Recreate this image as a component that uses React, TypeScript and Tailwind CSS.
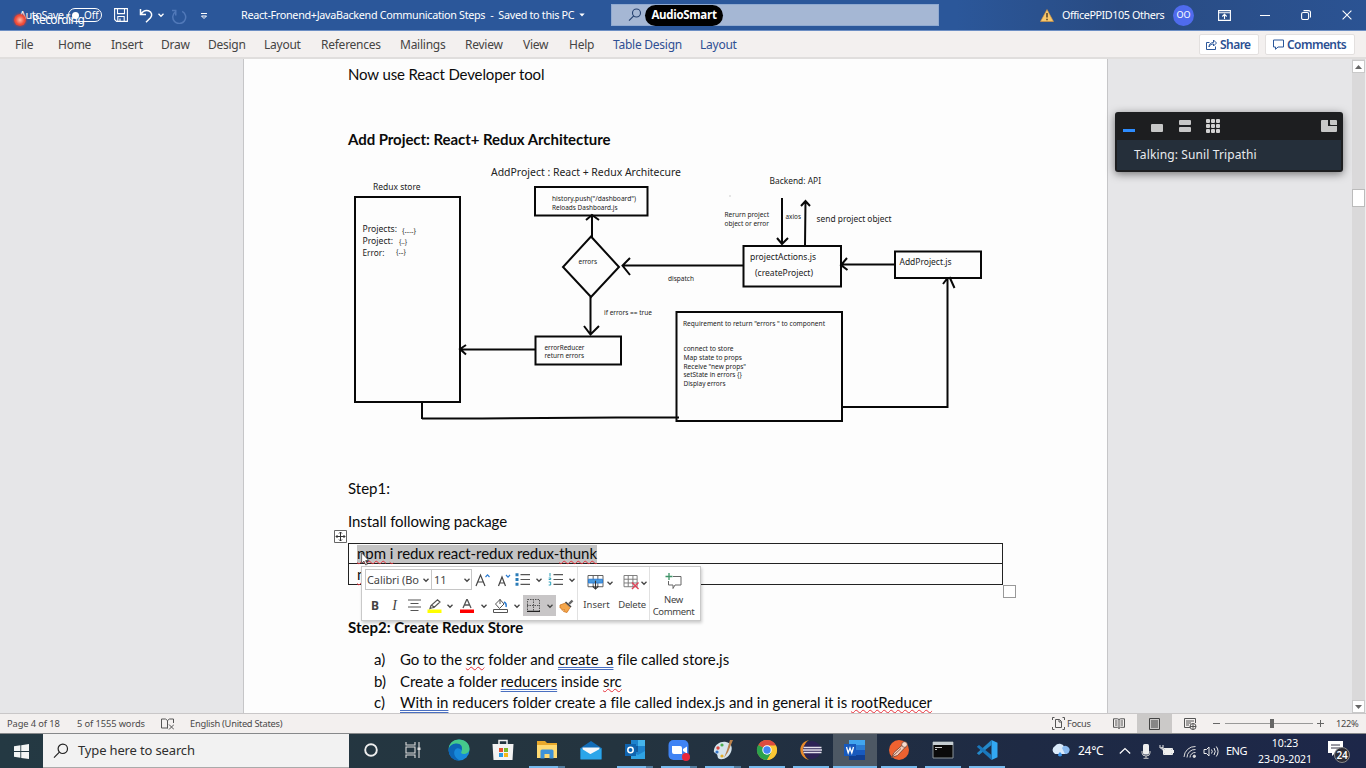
import React from 'react';

type Kids = { children?: React.ReactNode };

function Chevron({ className = '' }: { className?: string }) {
  return (
    <svg viewBox="0 0 8 8" className={`h-[8px] w-[8px] shrink-0 ${className}`} fill="none" stroke="currentColor" strokeWidth="1.3">
      <path d="M1.5 2.8 4 5.3 6.5 2.8" />
    </svg>
  );
}

function TitleBar() {
  return (
    <header className="relative flex h-[31px] shrink-0 items-center border-b border-[#6d8fc4] bg-[linear-gradient(90deg,#2b579a_0%,#2b579a_70%,#294b82_82%,#2b5393_100%)] font-['Noto_Sans',sans-serif] text-[10.8px] text-white">
      <span className="ml-[19px] w-[49px] shrink-0 whitespace-nowrap text-[11px] tracking-[-0.5px]">AutoSave</span>
      <span className="flex h-[14px] w-[34px] shrink-0 items-center rounded-full border border-white pl-[3px] text-[10px]">
        <span className="mr-[5px] h-[7px] w-[7px] rounded-full bg-white" />
        Off
      </span>
      <svg viewBox="0 0 14 14" className="ml-[12px] h-[14px] w-[14px] shrink-0" fill="none" stroke="white" strokeWidth="1.1">
        <path d="M.6.6h12.8v12.8H2.6l-2-2zM3.5.6v5h7v-5M3.8 13.4V8.5h6.4v4.9M6 13v-2.5" />
      </svg>
      <svg viewBox="0 0 14 15" className="ml-[11px] h-[15px] w-[14px] shrink-0" fill="none" stroke="white" strokeWidth="1.5">
        <path d="M1.5 1v5.5H7M1.8 6.3C4 3 7 2 9.5 2.8c3.5 1.2 4 4.500 2 7L7 14.2" />
      </svg>
      <Chevron className="ml-[4px]" />
      <svg viewBox="0 0 14 14" className="ml-[7px] mt-[2px] h-[15px] w-[15px] shrink-0 text-[#5179b9]" fill="none" stroke="currentColor" strokeWidth="1.4">
        <path d="M9.500 2.200A6 6 0 1 1 3.500 2.500M3.500 6V1.500H0" />
      </svg>
      <svg viewBox="0 0 8 8" className="ml-[13px] mt-[2px] h-[8px] w-[8px] shrink-0" fill="none" stroke="white" strokeWidth="1">
        <path d="M1 1.500h6M1.500 4h5L4 6.500z" />
      </svg>
      <span className="ml-[33px] w-[335px] shrink-0 whitespace-pre tracking-[-0.31px]">React-Fronend+JavaBackend Communication Steps  -  Saved to this PC</span>
      <svg viewBox="0 0 8 8" className="ml-[2px] h-[8px] w-[8px] shrink-0" fill="white"><path d="M1.300 2.500h5.400L4 5.500z" /></svg>
      <div className="ml-[25px] flex h-[22px] w-[328px] shrink-0 items-center border border-[#8fa9d0] bg-[#a5b7d4] pl-[16px]">
        <svg viewBox="0 0 14 14" className="h-[14px] w-[14px] shrink-0" fill="none" stroke="#24406f" strokeWidth="1.100">
          <circle cx="8.500" cy="5" r="4" /><path d="M5.700 7.900 1 12.700" />
        </svg>
        <span className="ml-[3px] flex h-[21px] w-[78px] items-center justify-center rounded-full bg-black font-['Open_Sans',sans-serif] text-[11.5px] font-bold tracking-[-0.3px]">AudioSmart</span>
      </div>
      <svg viewBox="0 0 14 13" className="ml-[101px] h-[13px] w-[14px] shrink-0">
        <path d="M7 .5 13.500 12.500H.5z" fill="#f8c86b" stroke="#d9963c" strokeWidth=".6" />
        <path d="M7 4v4.500M7 9.800v1.400" stroke="#3a2b1c" strokeWidth="1.300" />
      </svg>
      <span className="ml-[8px] w-[103px] shrink-0 whitespace-nowrap tracking-[-0.42px]">OfficePPID105 Others</span>
      <span className="ml-[8px] flex h-[21px] w-[21px] shrink-0 items-center justify-center rounded-full bg-[#4f6bed] text-[9px]">OO</span>
      <svg viewBox="0 0 13 11" className="ml-[24px] h-[11px] w-[13px] shrink-0" fill="none" stroke="white" strokeWidth="1.100">
        <path d="M.6.6h11.800v9.800H.6zM.6 2.700h11.800M6.500 9V4.500M4.300 6.500l2.200-2.200 2.200 2.200" />
      </svg>
      <span className="ml-[29px] h-px w-[10px] shrink-0 bg-white" />
      <svg viewBox="0 0 10 10" className="ml-[31px] h-[10px] w-[10px] shrink-0" fill="none" stroke="white" strokeWidth="1.100">
        <rect x=".6" y="2.500" width="7" height="7" rx="1.500" /><path d="M2.500.6H7.500a2 2 0 0 1 2 2V7.500" />
      </svg>
      <svg viewBox="0 0 10 10" className="ml-[31px] h-[10px] w-[10px] shrink-0" fill="none" stroke="white" strokeWidth="1.100"><path d="m.6.6 8.800 8.800M9.400.6.6 9.400" /></svg>
      <div className="absolute left-[14px] top-[12px] flex items-center">
        <span className="h-[12px] w-[12px] rounded-full bg-[radial-gradient(circle,#ffb9a8_0%,#f2513d_50%,#cc2c20_100%)] shadow-[0_0_3px_#e03a2c]" />
        <span className="ml-[6px] text-[12px] leading-[16px] tracking-[-0.55px]">Recording</span>
      </div>
    </header>
  );
}

const tabs: [string, string][] = [
  ['File', 'w-[43px]'], ['Home', 'w-[53px]'], ['Insert', 'w-[50px]'], ['Draw', 'w-[47px]'], ['Design', 'w-[56px]'],
  ['Layout', 'w-[57px]'], ['References', 'w-[79px]'], ['Mailings', 'w-[65px]'], ['Review', 'w-[58px]'], ['View', 'w-[46px]'], ['Help', 'w-[44px]'],
];

function Ribbon() {
  return (
    <nav className="flex h-[28px] shrink-0 items-center border-b-2 border-[#e0dedd] bg-[#f3f0ef] pl-[15px] pt-px font-['Noto_Sans',sans-serif] text-[12px] tracking-[-0.25px] text-[#454443]">
      {tabs.map(([t, w]) => <span key={t} className={`${w} shrink-0 whitespace-nowrap`}>{t}</span>)}
      <span className="w-[87px] shrink-0 text-[#2f4f93]">Table Design</span>
      <span className="w-[499px] shrink-0 text-[#2f4f93]">Layout</span>
      <span className="flex h-[21px] w-[60px] shrink-0 items-center rounded-[2px] border border-[#e3e0df] bg-white pl-[6px] font-semibold tracking-[-0.55px] text-[#2b4f92]">
        <svg viewBox="0 0 11 11" className="mr-[3px] h-[11px] w-[11px] shrink-0" fill="none" stroke="#2b579a" strokeWidth="1"><path d="M3.500 3.500h-3v7h9V7.500M3 8c0-3 2-4.500 4.500-4.500V1l3 3-3 3V5C5.500 5 4 5.500 3 8z" /></svg>
        Share
      </span>
      <span className="ml-[6px] flex h-[21px] w-[90px] shrink-0 items-center rounded-[2px] border border-[#e3e0df] bg-white pl-[7px] font-semibold tracking-[-0.55px] text-[#2b4f92]">
        <svg viewBox="0 0 11 11" className="mr-[3px] h-[11px] w-[11px] shrink-0" fill="none" stroke="#2b579a" strokeWidth="1"><path d="M.5 1h10v7H5L2.500 10.300V8h-2z" /></svg>
        Comments
      </span>
    </nav>
  );
}

function Txt({ x, y, w, s = 7.6, children }: { x: number; y: number; w: number; s?: number } & Kids) {
  return <text x={x} y={y - 0.4} fontSize={s} textLength={w} lengthAdjust="spacingAndGlyphs">{children}</text>;
}

function Diagram() {
  return (
    <svg viewBox="348 160 655 270" className="mt-[10px] h-[270px] w-[655px] shrink-0 font-['Noto_Sans',sans-serif]" fill="#222">
      <g fill="none" stroke="#080808" strokeWidth="2">
        <rect x="355" y="197" width="105" height="205" />
        <rect x="535" y="187" width="112.500" height="28.500" />
        <rect x="535.500" y="336.500" width="85.500" height="28" />
        <rect x="743.500" y="246" width="97.500" height="40.500" />
        <rect x="895" y="251.500" width="86" height="26.500" />
        <rect x="676.500" y="312" width="165.500" height="109" />
        <path d="M591 236.500 619 267 591 297 563 267z" />
        <path d="M592 237V215M586 220l6-5 7 5M590.500 297v37M584 326l6.500 8.500 8.500-8.500" />
        <path d="M743 265.500H623M630 258l-7.500 7.500 7.500 9.500" />
        <path d="M535 349.500h-74M466 345l-6 4 6 5.500" />
        <path d="M782 198v46M777 238l5 6 6-6M805 246l.5-45M801 206l4.500-5 4.500 5" />
        <path d="M895 264.500H842M847 258l-6 7 6.500 5" />
        <path d="M842 407h105.500V278M943 284l4.500-6M949.500 277l5 11" />
        <path d="M422 402v17M422 418.500h60l135-1h62" />
      </g>
      <circle cx="730" cy="196" r=".7" fill="#bbb" />
      <Txt x={491} y={176.400} w={190} s={10.800}>AddProject : React + Redux Architecure</Txt>
      <Txt x={373} y={190} w={47.500} s={9}>Redux store</Txt>
      <Txt x={362.500} y={232} w={34.500} s={9}>Projects:</Txt>
      <Txt x={362.500} y={244} w={30.500} s={9}>Project:</Txt>
      <Txt x={362.500} y={256} w={22} s={9}>Error:</Txt>
      <Txt x={402} y={233} w={14} s={7}>{'{.....}'}</Txt>
      <Txt x={399} y={244} w={8} s={7}>{'{..}'}</Txt>
      <Txt x={396} y={254.500} w={10} s={7}>{'{...}'}</Txt>
      <Txt x={552} y={201.400} w={84} s={7.400}>history.push("/dashboard")</Txt>
      <Txt x={552} y={210.400} w={65.500} s={7.400}>Reloads Dashboard.js</Txt>
      <Txt x={578.500} y={264.400} w={18.500} s={7}>errors</Txt>
      <Txt x={604} y={315.400} w={48} s={7}>if errors == true</Txt>
      <Txt x={544.500} y={350} w={40} s={7}>errorReducer</Txt>
      <Txt x={544.500} y={358.800} w={39.500} s={7}>return errors</Txt>
      <Txt x={668} y={281.400} w={26} s={7.200}>dispatch</Txt>
      <Txt x={769.500} y={184.400} w={51.500} s={8.800}>Backend: API</Txt>
      <Txt x={724.500} y={217.800} w={44.500} s={7.200}>Rerurn project</Txt>
      <Txt x={724.500} y={226.500} w={44.500} s={7.200}>object or error</Txt>
      <Txt x={785.500} y={219.400} w={15.500} s={7}>axios</Txt>
      <Txt x={816.500} y={222.400} w={75} s={9.200}>send project object</Txt>
      <Txt x={750} y={260.500} w={66} s={9.400}>projectActions.js</Txt>
      <Txt x={755} y={276.400} w={58} s={9.400}>(createProject)</Txt>
      <Txt x={899.500} y={265.400} w={52} s={9.400}>AddProject.js</Txt>
      <Txt x={683} y={326.500} w={142} s={7.100}>Requirement to return "errors " to component</Txt>
      <Txt x={683.500} y={351.500} w={50} s={7.100}>connect to store</Txt>
      <Txt x={683.500} y={360.400} w={58.500} s={7.100}>Map state to props</Txt>
      <Txt x={683.500} y={369} w={62.500} s={7.100}>Receive "new props"</Txt>
      <Txt x={683.500} y={377.600} w={58.500} s={7.100}>setState in errors {'{}'}</Txt>
      <Txt x={683.500} y={386.400} w={42} s={7.100}>Display errors</Txt>
    </svg>
  );
}

function Sp({ children }: Kids) {
  return <span className="underline decoration-[#e8303a] decoration-wavy decoration-[1px] underline-offset-[1px] [text-decoration-skip-ink:none]">{children}</span>;
}
function Gr({ children }: Kids) {
  return <span className="underline decoration-[#4a6fc0] decoration-double decoration-[1px] underline-offset-[2px] [text-decoration-skip-ink:none]">{children}</span>;
}

function Cell({ w, on, children }: { w: string; on?: boolean } & Kids) {
  return <span className={`${w} flex h-full shrink-0 items-center justify-center ${on ? 'bg-[#c8c6c7]' : ''}`}>{children}</span>;
}

function MiniToolbar() {
  return (
    <div className="absolute left-[117px] top-[507px] flex h-[55px] w-[340px] border border-[#c9c9c9] bg-white font-['Noto_Sans',sans-serif] tracking-normal text-[#444] shadow-[1px_2px_3px_rgba(0,0,0,0.2)]">
      <div className="flex w-[216px] shrink-0 flex-col border-r border-[#e1e1e1] pl-[3px] pt-[2px]">
        <div className="flex h-[21px] items-center">
          <span className="flex h-[21px] w-[67px] shrink-0 items-center border border-[#c6c6c6] pl-[1px] text-[11px]">
            <span className="w-[55px] whitespace-nowrap tracking-[-0.1px]">Calibri (Bo</span><Chevron />
          </span>
          <span className="-ml-px flex h-[21px] w-[41px] shrink-0 items-center justify-between border border-[#c6c6c6] pl-[2px] text-[11px]">11<Chevron /></span>
          <Cell w="w-[21px]">
            <svg viewBox="0 0 15 14" className="h-[14px] w-[15px]" fill="none" stroke="#444" strokeWidth="1.200"><path d="m1 13 4.500-11L10 13M2.700 9h5.700" /><path d="m10.500 4 2-2.200 2 2.200" stroke="#2b7cd3" /></svg>
          </Cell>
          <Cell w="w-[20px]">
            <svg viewBox="0 0 15 14" className="h-[14px] w-[15px]" fill="none" stroke="#444" strokeWidth="1.200"><path d="m2.500 13 3.500-9 3.500 9M3.800 10h4.400" /><path d="m10 2 2 2.200L14 2" stroke="#2b7cd3" /></svg>
          </Cell>
          <Cell w="w-[18px]">
            <svg viewBox="0 0 15 13" className="h-[13px] w-[15px]" stroke="#555" strokeWidth="1.200"><path d="M5.500 1.700H15M5.500 6.500H15M5.500 11.300H15" /><path d="M.5 1.700h3M.5 6.500h3M.5 11.300h3" stroke="#2b7cb8" strokeWidth="3" /></svg>
          </Cell>
          <Cell w="w-[15px]"><Chevron /></Cell>
          <Cell w="w-[19px]">
            <svg viewBox="0 0 15 13" className="h-[13px] w-[15px]" stroke="#555" strokeWidth="1.200"><path d="M5.500 1.700H15M5.500 6.500H15M5.500 11.300H15" /><path d="M2 0v3.500M.7 5h2v1.500h-2M.7 9h2v3h-2" stroke="#2b9fb8" fill="none" strokeWidth="1" /></svg>
          </Cell>
          <Cell w="w-[14px]"><Chevron /></Cell>
        </div>
        <div className="mt-[5px] flex h-[21px] items-center">
          <Cell w="w-[20px]"><b className="text-[12px]">B</b></Cell>
          <Cell w="w-[19px]"><i className="font-['Liberation_Serif',serif] text-[14px]">I</i></Cell>
          <Cell w="w-[20px]"><svg viewBox="0 0 13 13" className="h-[13px] w-[13px]" stroke="#555" strokeWidth="1.200"><path d="M0 1h13M2.500 4.500h8M0 8h13M2.500 11.500h8" /></svg></Cell>
          <Cell w="w-[20px]">
            <svg viewBox="0 0 15 14" className="h-[14px] w-[15px]"><path d="M.5 10.500h14V14H.5z" fill="#ffff00" /><path d="m3 9.500 1-3L10.500.800 13 3 7 8.500 4.500 9zM4.500 6l3 2.500" fill="none" stroke="#555" strokeWidth="1.200" /></svg>
          </Cell>
          <Cell w="w-[12px]"><Chevron /></Cell>
          <Cell w="w-[22px]">
            <svg viewBox="0 0 14 14" className="h-[14px] w-[14px]"><path d="M0 10.500h14V14H0z" fill="#f00" /><path d="M3 9 7 0l4 9M4.500 6h5" fill="none" stroke="#555" strokeWidth="1.300" /></svg>
          </Cell>
          <Cell w="w-[11px]"><Chevron /></Cell>
          <Cell w="w-[22px]">
            <svg viewBox="0 0 15 15" className="h-[15px] w-[15px]" fill="none" stroke="#555"><path d="M.5 11.500h14v3H.5zM2.500 6 7 1.500 11 6l-4.500 4.500zM7 1v5" /><path d="M11 4c2 1 2.500 3 2 5" stroke="#2b7cd3" strokeWidth="1.500" /></svg>
          </Cell>
          <Cell w="w-[12px]"><Chevron /></Cell>
          <Cell w="w-[20px]" on>
            <svg viewBox="0 0 13 13" className="h-[13px] w-[13px]" fill="none" stroke="#555"><path d="M.5.500h12v12H.5zM6.500 0v13M0 6.500h13" strokeDasharray="1.500 1" /><path d="M0 12.500h13" strokeWidth="1.500" stroke="#222" /></svg>
          </Cell>
          <Cell w="w-[13px]" on><Chevron /></Cell>
          <Cell w="w-[21px]">
            <svg viewBox="0 0 15 14" className="h-[14px] w-[15px]"><path d="m1 6 5.500-2 4.500 4.500-3 5-3.500-1 1-2-2.500.8-.5-2-1.500-.3z" fill="#f4a64b" stroke="#d2761f" strokeWidth=".8" /><path d="M6.500 3 12 8" fill="none" stroke="#444" strokeWidth="1.600" /><path d="m10 5 3.500-3.500" stroke="#666" strokeWidth="2.400" /></svg>
          </Cell>
        </div>
      </div>
      <div className="flex w-[72px] shrink-0 border-r border-[#e1e1e1] text-[9.5px]">
        <div className="flex w-[37px] flex-col items-center pt-[8px]">
          <span className="flex items-center pl-[8px]">
            <svg viewBox="0 0 17 16" className="h-[15px] w-[17px]" fill="none" stroke="#555"><path d="M.5.500h16v12H.5zM6 .5v12M11 .5v12" /><path d="M1 4.500h15v4H1z" fill="#4a9ade" stroke="#2b7cd3" /><path d="M8.500 6v9M5.500 12l3 3 3-3" stroke="#333" strokeWidth="1.200" /></svg>
            <Chevron className="ml-[2px]" />
          </span>
          <span className="mt-[8px] leading-[14px]">Insert</span>
        </div>
        <div className="flex w-[34px] flex-col items-center pt-[8px]">
          <span className="flex items-center pl-[6px]">
            <svg viewBox="0 0 17 16" className="h-[15px] w-[17px]" fill="none" stroke="#777"><path d="M.5.500h14v12H.5zM5 .5v12M10 .5v12M.5 4.500h14M.5 8.500h14" /><path d="m9 8 7 7M16 8l-7 7" stroke="#e04358" strokeWidth="1.500" /></svg>
            <Chevron />
          </span>
          <span className="mt-[8px] leading-[14px] tracking-[-0.2px]">Delete</span>
        </div>
      </div>
      <div className="flex flex-1 flex-col items-center pr-[3px] pt-[6px] text-[9.5px] leading-[12px] tracking-[-0.35px]">
        <svg viewBox="0 0 17 16" className="mb-[5px] h-[16px] w-[17px]" fill="none" stroke="#666"><path d="M8 3.500h8v8.500h-6l-2 3.500V12H3.500V8" /><path d="M4 0v7M.5 3.500h7" stroke="#3f9468" strokeWidth="1.300" /></svg>
        <span>New</span><span>Comment</span>
      </div>
    </div>
  );
}

function Page() {
  return (
    <div className="relative flex w-[865px] shrink-0 flex-col border-x border-[#c6c6c8] bg-[#fdfdfd] pl-[104px] pt-[4px] font-['Lato',sans-serif] text-[15px] leading-[22px] text-[#0b0b0b]">
      <p className="h-[22px] tracking-[-0.13px]">Now use React Developer tool</p>
      <h2 className="mt-[43px] h-[22px] font-bold tracking-[-0.06px]">Add Project: React+ Redux Architecture</h2>
      <Diagram />
      <p className="mt-[47px] h-[22px]">Step1:</p>
      <p className="mt-[11px] h-[22px] tracking-[-0.07px]">Install following package</p>
      <div className="relative mt-[11px] h-[42px] w-[655px] border border-[#222]">
        <div className="flex h-[20px] items-center border-b border-[#222] pl-[8px]">
          <span className="h-[18px] bg-[#c3c3c3] leading-[17px] tracking-[-0.06px]"><Sp>npm</Sp> <Sp>i</Sp> redux react-redux redux-<Sp>thunk</Sp></span>
        </div>
        <div className="pl-[8px] leading-[20px]"><Sp>n</Sp></div>
        <svg viewBox="0 0 13 13" className="absolute -left-[15px] -top-[14px] h-[13px] w-[13px]" fill="none" stroke="#666"><path d="M.5.500h12v12H.5z" fill="#fff" /><path d="M6.500 2v9M2 6.500h9M5 3.500l1.500-1.500L8 3.500M5 9.500 6.500 11 8 9.500M3.500 5 2 6.500 3.500 8M9.500 5 11 6.500 9.500 8" stroke="#333" /></svg>
        <span className="absolute -bottom-[14px] -right-[14px] h-[13px] w-[13px] border border-[#999] bg-white" />
      </div>
      <h2 className="mt-[31px] h-[22px] font-bold">Step2: Create Redux Store</h2>
      <ol className="mt-[11px] pl-[26px] leading-[21.5px] tracking-[-0.03px]">
        <li className="flex"><span className="w-[26px]">a)</span><span className="whitespace-pre tracking-[-0.06px]">Go to the <Sp>src</Sp> folder and <Gr>create  a</Gr> file called store.js</span></li>
        <li className="flex"><span className="w-[26px]">b)</span><span>Create a folder <Gr>reducers</Gr> inside <Sp>src</Sp></span></li>
        <li className="flex"><span className="w-[26px]">c)</span><span className="whitespace-nowrap"><Gr>With in</Gr> reducers folder create a file called index.js and in general it is <Sp>rootReducer</Sp></span></li>
      </ol>
      <MiniToolbar />
      <svg viewBox="0 0 9 14" className="absolute left-[117px] top-[493px] h-[14px] w-[9px]"><path d="M.6.800v10.500l2.400-2.200L4.700 13l1.600-.7-1.700-3.700h3.300z" fill="#fff" stroke="#333" strokeWidth=".7" /></svg>
    </div>
  );
}

function TalkingPanel() {
  return (
    <aside className="absolute left-[1115px] top-[53px] flex h-[60px] w-[228px] flex-col rounded-[3px] bg-[#1d1e20] px-[2px] pb-[2px] shadow-[0_2px_8px_rgba(0,0,0,0.5)]">
      <div className="flex h-[28px] items-center pl-[6px] pr-[4px]">
        <span className="mt-[9px] h-[3px] w-[12px] bg-[#2d8cff]" />
        <span className="ml-[16px] mt-[4px] h-[8px] w-[12px] rounded-[1px] bg-[#c7c7c7]" />
        <span className="ml-[16px] flex flex-col gap-[2px]"><i className="h-[5px] w-[12px] rounded-[1px] bg-[#c7c7c7]" /><i className="h-[5px] w-[12px] rounded-[1px] bg-[#c7c7c7]" /></span>
        <span className="ml-[15px] grid grid-cols-3 gap-[1px]">
          {Array.from({ length: 9 }, (_, i) => <i key={i} className="h-[4px] w-[4px] rounded-[1px] bg-[#d2d2d2]" />)}
        </span>
        <svg viewBox="0 0 16 12" className="ml-auto h-[12px] w-[16px]" fill="#c7c7c7"><path d="M1 0h6v6h9v5a1 1 0 0 1-1 1H1a1 1 0 0 1-1-1V1a1 1 0 0 1 1-1zM9 0h6a1 1 0 0 1 1 1v4H10a1 1 0 0 1-1-1z" /></svg>
      </div>
      <div className="flex flex-1 items-center bg-[#252f3a] pl-[17px] font-['Noto_Sans',sans-serif] text-[12px] tracking-[0.12px] text-[#e9ebee]">Talking: Sunil Tripathi</div>
    </aside>
  );
}

function ScrollBar() {
  return (
    <div className="ml-auto flex h-full w-[14px] flex-col border-r border-[#eee] bg-[#dad9da]">
      <span className="mt-[1px] flex h-[13px] items-center justify-center border border-[#c9c9c9] bg-white"><svg viewBox="0 0 7 4" className="h-[4px] w-[7px]" fill="#666"><path d="M0 4 3.500 0 7 4z" /></svg></span>
      <span className="mt-[116px] h-[18px] border border-[#bbb] bg-white" />
      <span className="mt-auto flex h-[13px] items-center justify-center border border-[#c9c9c9] bg-white"><svg viewBox="0 0 7 4" className="h-[4px] w-[7px]" fill="#666"><path d="M0 0 3.500 4 7 0z" /></svg></span>
    </div>
  );
}

function StatusBar() {
  return (
    <div className="flex h-[20px] shrink-0 items-center border-t border-[#c9c7c8] bg-[#f3f0ef] pl-[7px] font-['Noto_Sans',sans-serif] text-[9.3px] text-[#4a4949]">
      <span className="w-[70px] whitespace-nowrap tracking-[-0.1px]">Page 4 of 18</span>
      <span className="w-[84px] whitespace-nowrap tracking-[-0.1px]">5 of 1555 words</span>
      <svg viewBox="0 0 13 12" className="h-[12px] w-[13px]" fill="none" stroke="#555"><path d="M6.500 2.500v8M6.500 10H.5V1h4l2 1.500 2-1.500h4v4M8 6.500l5 5M13 6.500l-5 5" /></svg>
      <span className="ml-[16px] w-[862px] tracking-[-0.25px]">English (United States)</span>
      <svg viewBox="0 0 13 13" className="h-[13px] w-[13px]" fill="none" stroke="#555"><path d="M.5 3V.500h2M10.500.500h2V3M.5 10v2.500h2M10.500 12.500h2V10M3.500 2.500h4l2 2v6h-6zM7 2.500V5h2.500" /></svg>
      <span className="ml-[2px] w-[48px] tracking-[-0.3px]">Focus</span>
      <svg viewBox="0 0 12 11" className="-ml-[2px] h-[11px] w-[12px]" fill="none" stroke="#555"><path d="M6 1.500v9M.5.800h4L6 1.500 7.500.800h4v8.500h-4L6 10.500 4.500 9.300h-4zM2 3h2.500M2 5h2.500M2 7h2.500M7.500 3H10M7.500 5H10M7.500 7H10" /></svg>
      <span className="ml-[12px] flex h-full w-[35px] items-center justify-center bg-[#cbc9c8]"><svg viewBox="0 0 11 12" className="h-[12px] w-[11px]" fill="none" stroke="#444"><path d="M.5.500h10v11H.5zM2 3h7M2 5h7M2 7h7M2 9h7" /></svg></span>
      <svg viewBox="0 0 13 12" className="ml-[12px] h-[12px] w-[13px]" fill="none" stroke="#555"><path d="M6 9.500H.5v-9h11V5M2 3h8M2 5h5M2 7h3" /><circle cx="9" cy="8.500" r="3" /><path d="M6 8.500h6M9 5.500v6" /></svg>
      <span className="ml-[16px] h-px w-[7px] bg-[#666]" />
      <span className="ml-[5px] flex h-[10px] w-[88px] items-center justify-center bg-[linear-gradient(#999,#999)] bg-[length:100%_1px] bg-center bg-no-repeat"><i className="ml-[5px] h-[9px] w-[4px] bg-[#666]" /></span>
      <svg viewBox="0 0 7 7" className="ml-[4px] h-[7px] w-[7px]" stroke="#666"><path d="M0 3.500h7M3.500 0v7" /></svg>
      <span className="ml-[12px] tracking-[-0.3px]">122%</span>
    </div>
  );
}

const apps: { name: string; bar?: boolean; split?: boolean; active?: boolean; art: React.ReactNode }[] = [
  { name: 'cortana', art: <circle cx="11" cy="11" r="5.800" fill="none" stroke="#eee" strokeWidth="1.900" /> },
  { name: 'taskview', art: <g fill="none" stroke="#ddd" strokeWidth="1.100"><path d="M2 3v3h9V3M2 19v-3h9v3M2 8h9v6H2zM15 3v16" /><path d="M13.500 8.500h3v2.500h-3z" fill="#ddd" stroke="none" /></g> },
  { name: 'edge', art: <g><circle cx="11" cy="11" r="10.500" fill="#1788d9" /><path d="M.6 9.500C1.500 3.500 6 .5 11 .5c6 0 10.500 4 10.500 9 0 4-3 5.500-6 5.500-2 0-3-1-2-2.500C15 9 12 7 8.500 7 4.500 7 1.500 8.500.6 9.500z" fill="#45c98c" /><path d="M.6 9.500C2.500 5.500 6 4.500 8.500 4.500c4.500 0 6.500 3 5 7C12 9 8.500 8.500 7 11c-2.500 4 1 9 5 10.400C4 22 .2 16 .6 9.500z" fill="#0d65b5" /></g> },
  { name: 'store', art: <g><path d="M7 6V1.500h8V6" fill="none" stroke="#f3f3f3" strokeWidth="1.500" /><path d="M.5 5h21l-1 16h-19z" fill="#f3f3f3" /><path d="M7 9h4v4H7z" fill="#e8502f" /><path d="M12 9h4v4h-4z" fill="#7db92b" /><path d="M7 14h4v4H7z" fill="#2a9be4" /><path d="M12 14h4v4h-4z" fill="#f7b916" /></g> },
  { name: 'explorer', bar: true, split: true, art: <g><path d="M1 2h8l2 2h10v15H1z" fill="#e8a82b" /><path d="M1 6h20v13H1z" fill="#ffda72" /><path d="M4.500 12q0-1.500 1.500-1.500h10q1.500 0 1.500 1.500v7.500h-4V15h-5v4.500h-4z" fill="#3d92d9" /></g> },
  { name: 'mail', art: <g><path d="m.5 9 10.500-7 10.500 7v11H.5z" fill="#126db8" /><path d="M2.500 8.500h17v6l-8.500 4-8.500-4z" fill="#f4f7fa" /><path d="M.5 9 11 15.500.5 20.500zM21.500 9v11.500H.5z" fill="#2ba6ea" /></g> },
  { name: 'outlook', bar: true, split: true, art: <g><path d="M7 1h14v18H7z" fill="#1e83cd" /><path d="M14 1h7v6h-7z" fill="#45b4eb" /><path d="M7 7h7v6H7z" fill="#125b9e" /><path d="m7 12 7 4 7-4v8H7z" fill="#2fa3e4" /><path d="M1 5h11v12H1z" fill="#0f64af" /><circle cx="6.500" cy="11" r="2.700" fill="none" stroke="white" strokeWidth="1.500" /></g> },
  { name: 'zoom', bar: true, split: true, art: <g><rect x=".5" y="1" width="20" height="20" rx="5" fill="#3f83f4" /><path d="M4 7h8q2 0 2 2v6H6q-2 0-2-2zM15 10l4-2.500v7L15 12z" fill="white" /><circle cx="18" cy="18" r="4" fill="#e8273c" /></g> },
  { name: 'paint', bar: true, split: true, art: <g><path d="M2 11C3 5 9 2 14 3c5 1 7 5 5 10-2 5-7 8-11 7-3-.6-2-3-3-4.500S1 14 2 11z" fill="#d6e4ec" /><circle cx="6" cy="9" r="1.700" fill="#db4840" /><circle cx="10" cy="6" r="1.600" fill="#4caf50" /><circle cx="5" cy="13" r="1.600" fill="#3676c8" /><circle cx="10" cy="17" r="1.600" fill="#e4ae28" /><path d="M18 1h3l-5 12-4 6 3-8z" fill="#b9814c" /></g> },
  { name: 'chrome', bar: true, art: <g><circle cx="11" cy="11" r="10" fill="#e2ad31" /><path d="M11 11 2.300 6A10 10 0 0 1 19.700 6z" fill="#dd4b3e" /><path d="M11 11 2.300 6A10 10 0 0 0 11 21l4.500-7.500z" fill="#2ba24c" /><path d="M11 6.500h9a10 10 0 0 1-9 14.500l4-7z" fill="#fbc834" /><circle cx="11" cy="11" r="4.700" fill="white" /><circle cx="11" cy="11" r="3.700" fill="#4285f4" /></g> },
  { name: 'eclipse', bar: true, art: <g><path d="M9 1C-3 4-2 18 9 21 2 17 2 5 9 1z" fill="#e88a2a" /><circle cx="12" cy="11" r="9" fill="#2c2255" /><path d="M3.500 8.500h18M3 11h19M3.500 13.500h18" stroke="#e4e1ec" strokeWidth="1.300" /></g> },
  { name: 'word', bar: true, active: true, art: <g><path d="M5 1h16v20H5z" fill="#2b7cd3" /><path d="M5 1h16v5H5z" fill="#41a5ee" /><path d="M5 11h16v5H5z" fill="#185abd" /><path d="M5 16h16v5H5z" fill="#103f91" /><path d="M0 5h12v12H0z" fill="#185abd" /><path d="m2.500 8 1.700 6L6 9l1.800 5 1.700-6" fill="none" stroke="white" strokeWidth="1.300" /></g> },
  { name: 'postman', bar: true, art: <g><circle cx="11" cy="11" r="10" fill="#ee6230" /><path d="m3.500 18.500 2.500-5 9-8 2.500 2.500-8 8.500z" fill="#f5cdbb" stroke="#704030" strokeWidth=".8" /><circle cx="16.500" cy="5.500" r="2.800" fill="#f8dccf" stroke="#704030" strokeWidth=".7" /><path d="m3.500 18.500 9.500-9" stroke="#704030" strokeWidth=".8" /></g> },
  { name: 'cmd', bar: true, art: <g><path d="M1 3h20v16H1z" fill="#0a0a0a" stroke="#8b9499" /><path d="M1 3h20v3H1z" fill="#c5cdd2" /><path d="M3 8.500h7M3 10.500h2" stroke="#ccc" /></g> },
  { name: 'vscode', bar: true, art: <g><path d="m15.500 1 6 2.800v14.400l-6 2.800z" fill="#32a8f2" /><path d="M15.500 6 3 16 .8 14.200 15.500 1z" fill="#2489ca" /><path d="M15.500 16 3 6 .8 7.800 15.500 21z" fill="#1a78bd" /></g> },
];

function TaskBar() {
  return (
    <footer className="flex h-[35px] shrink-0 items-center border-t border-[#87898b] bg-[linear-gradient(90deg,#243943_0%,#24343f_45%,#1e2a44_75%,#1d2749_100%)] font-['Noto_Sans',sans-serif] text-white">
      <span className="flex w-[43px] shrink-0 justify-center">
        <svg viewBox="0 0 16 16" className="h-[15px] w-[15px]" fill="#f3f5f5"><path d="M0 2.300 6.800 1.300V7.500H0zM7.700 1.200 16 0v7.500H7.700zM0 8.400h6.800v6.300L0 13.700zM7.700 8.400H16V16l-8.300-1.200z" /></svg>
      </span>
      <div className="flex h-full w-[306px] shrink-0 items-center border-b border-[#aaa] bg-[#f2f2f2] pl-[10px] text-[13px] text-[#2f2f2f]">
        <svg viewBox="0 0 16 16" className="mr-[9px] h-[16px] w-[16px]" fill="none" stroke="#222" strokeWidth="1.200"><circle cx="9.800" cy="5.800" r="4.700" /><path d="M6.400 9.200 1 14.600" /></svg>
        <span className="w-[118px] whitespace-nowrap tracking-[-0.15px]">Type here to search</span>
      </div>
      {apps.map((a) => (
        <span key={a.name} className={`flex h-full w-[44px] shrink-0 flex-col items-center ${a.active ? 'bg-[#4d5864]' : ''}`}>
          <svg viewBox="0 0 22 22" className="mt-[5px] h-[22px] w-[22px] shrink-0">{a.art}</svg>
          {a.bar && <span className={`mt-auto flex h-[2px] shrink-0 ${a.active ? 'w-full' : 'w-[36px]'} bg-[#76b9ed]`}>{a.split && <i className="ml-auto h-full w-[7px] bg-[#527c9e]" />}</span>}
        </span>
      ))}
      <svg viewBox="0 0 20 16" className="ml-[41px] h-[16px] w-[20px] shrink-0"><path d="M5 11a4.500 4.500 0 0 1 0-8A5.500 5.500 0 0 1 14.500 4a3.700 3.700 0 0 1 1 7z" fill="#d9e9fa" /><path d="M12 5a4 4 0 0 1 7 4c-.5 1.500-2 2-4 2z" fill="#8abaf0" /><path d="M10 9q-4 4 0 4.500Q14 13 10 9z" fill="#3a92e8" /></svg>
      <span className="ml-[8px] w-[27px] shrink-0 whitespace-nowrap text-[12px] tracking-[-0.3px]">24°C</span>
      <svg viewBox="0 0 12 8" className="ml-[14px] h-[8px] w-[12px] shrink-0" fill="none" stroke="white" strokeWidth="1.200"><path d="m.8 6.500 5.200-5 5.200 5" /></svg>
      <svg viewBox="0 0 10 15" className="ml-[10px] h-[15px] w-[10px] shrink-0"><rect x="2" y="0" width="6" height="10.500" rx="1.500" fill="#eee" /><path d="M1 7v2q0 3 4 3t4-3V7M5 12v2M2.500 14.300h5" fill="none" stroke="#ccc" /></svg>
      <svg viewBox="0 0 16 12" className="ml-[8px] h-[12px] w-[16px] shrink-0" fill="none" stroke="#eee"><path d="M4.500 3.500h9v6h-9zM14.500 5v3M3 2v2q0 1 1 1" /><path d="M5.500 4.500h7v4h-7z" fill="#eee" /><path d="M1 0v3h3V0" /></svg>
      <svg viewBox="0 0 13 13" className="ml-[8px] h-[13px] w-[13px] shrink-0" fill="none" stroke="#ddd"><path d="M1 12A11 11 0 0 1 12.500 1.500M4 12.500a8 8 0 0 1 8.500-8M7 12.500a5 5 0 0 1 5.500-5" /><circle cx="11.300" cy="11.300" r="1.200" fill="#ddd" /></svg>
      <svg viewBox="0 0 16 13" className="ml-[7px] h-[13px] w-[16px] shrink-0" fill="none" stroke="#eee"><path d="M1 4.500h2.500L6 2v9L3.500 8.500H1zM8.500 4.500q1.500 2 0 4M11 3q2.500 3.500 0 7M13.300 1.500q3.500 5 0 10" /></svg>
      <span className="ml-[7px] w-[22px] shrink-0 text-[11px] tracking-[-0.5px]">ENG</span>
      <span className="ml-[9px] flex w-[56px] shrink-0 flex-col items-center whitespace-nowrap text-[10.500px] leading-[16px] tracking-[-0.1px]"><span>10:23</span><span>23-09-2021</span></span>
      <span className="relative ml-[15px] h-[20px] w-[24px] shrink-0">
        <svg viewBox="0 0 15 15" className="h-[15px] w-[15px]"><path d="M0 0h15v12H7l-3 3v-3H0z" fill="#fff" /><path d="M3 4h9M3 7h9" stroke="#334" /></svg>
        <span className="absolute left-[6px] top-[6px] flex h-[16px] w-[16px] items-center justify-center rounded-full border border-[#8a8a8a] bg-[#2d2d35] text-[10px] font-semibold tracking-[-0.3px]">24</span>
      </span>
    </footer>
  );
}

export default function App() {
  return (
    <main className="flex h-[768px] w-[1366px] flex-col overflow-hidden bg-[#e6e6e8]">
      <TitleBar />
      <Ribbon />
      <section className="relative flex h-[654px] shrink-0 overflow-hidden bg-[#e6e6e8] pl-[243px]">
        <Page />
        <ScrollBar />
        <TalkingPanel />
      </section>
      <StatusBar />
      <TaskBar />
    </main>
  );
}
